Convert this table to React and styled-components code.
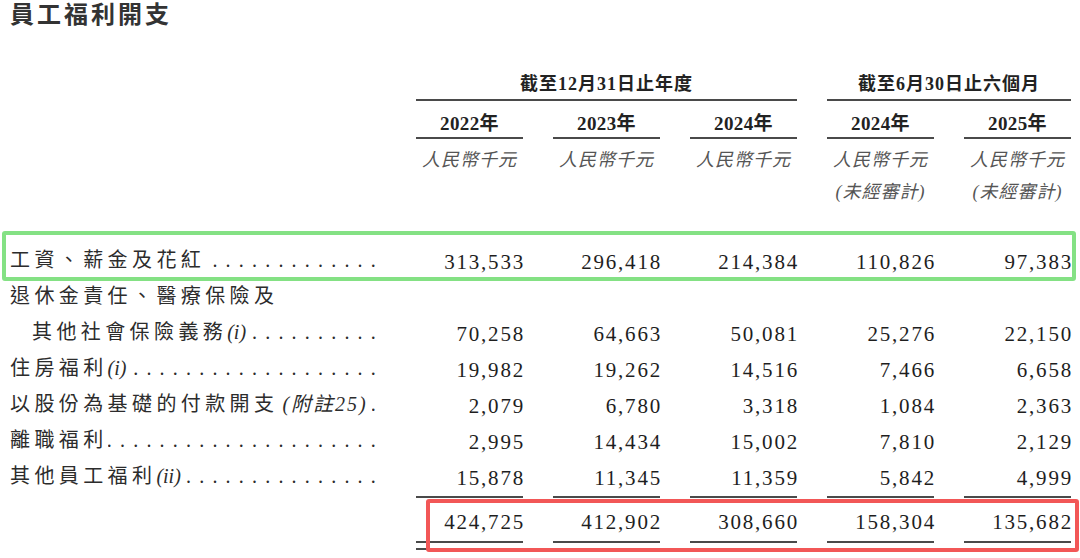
import React from "react";
import styled, { createGlobalStyle } from "styled-components";

const Global = createGlobalStyle`
  html, body { margin: 0; padding: 0; background: #fff; }
  body { font-family: "Liberation Serif", "Noto Sans CJK TC", serif; }
`;

const Page = styled.div`
  position: relative;
  width: 1080px;
  height: 558px;
  overflow: hidden;
  background: #fff;
`;

const Title = styled.h1`
  margin: 0;
  padding-left: 10px;
  font-family: "Noto Sans CJK TC", sans-serif;
  font-weight: 700;
  font-size: 24px;
  line-height: 26px;
  letter-spacing: 3px;
  color: #333;
`;

const Table = styled.div`
  display: grid;
  grid-template-columns: 376px repeat(5, 107px);
  grid-template-rows: 31px 38px 105px repeat(7, 36px) auto;
  column-gap: 30px;
  padding-left: 10px;
  margin-top: 44px;
  color: #222;
`;

const GroupHead = styled.div`
  grid-row: 1;
  grid-column: ${(p) => p.$start} / span ${(p) => p.$span};
  text-align: center;
  font-family: "Liberation Serif", "Noto Sans CJK TC", serif;
  font-weight: 700;
  font-size: 18px;
  line-height: 29px;
  letter-spacing: 1px;
  border-bottom: 2px solid #4a4a4a;
`;

const YearHead = styled.div`
  grid-row: 2;
  grid-column: ${(p) => p.$col};
  align-self: start;
  padding-top: 10px;
  text-align: center;
  font-family: "Liberation Serif", "Noto Sans CJK TC", serif;
  font-weight: 700;
  font-size: 19px;
  line-height: 26px;
  letter-spacing: 0.4px;
  border-bottom: 2px solid #4a4a4a;
`;

const Unit = styled.div`
  grid-row: 3;
  grid-column: ${(p) => p.$col};
  align-self: start;
  padding-top: 5px;
  text-align: center;
  font-family: "Liberation Serif", "Noto Sans CJK TC", serif;
  font-style: italic;
  font-size: 18px;
  line-height: 32px;
  letter-spacing: 1px;
  color: #555;
`;

const UnitLine = styled.div`
  white-space: nowrap;
`;

const Label = styled.div`
  grid-row: ${(p) => p.$row};
  grid-column: 1;
  display: flex;
  white-space: nowrap;
  padding-left: ${(p) => p.$indent || 0}px;
  padding-bottom: 4px;
  font-family: "Liberation Serif", "Noto Sans CJK TC", serif;
  font-size: 20px;
  line-height: 32px;
  letter-spacing: 4.4px;
  color: #2c2c2c;
`;

const LabelText = styled.span`
  flex: none;
`;

const Note = styled.i`
  font-family: "Liberation Serif", "Noto Sans CJK TC", serif;
  letter-spacing: ${(p) => (p.$wide ? 2 : 0)}px;
  padding-left: ${(p) => (p.$wide ? 4 : 0)}px;
  padding-right: 4px;
`;

const Dots = styled.span`
  flex: 1;
  min-width: 0;
  overflow: hidden;
  direction: rtl;
  letter-spacing: 8.2px;
  margin-right: 2px;
`;

const Num = styled.div`
  grid-row: ${(p) => p.$row};
  grid-column: ${(p) => p.$col};
  text-align: right;
  font-family: "Liberation Serif", serif;
  font-size: 21px;
  line-height: 36px;
  letter-spacing: 1.8px;
  margin-right: -2px;
  color: #1e1e1e;
`;

const TotalCell = styled.div`
  grid-row: 11;
  grid-column: ${(p) => p.$col};
  border-top: 2px solid #4a4a4a;
  border-bottom: 2px solid #4a4a4a;
  padding-bottom: 5px;
  align-self: start;
`;

const TotalValue = styled.div`
  padding-top: 5px;
  border-bottom: 2px solid #4a4a4a;
  text-align: right;
  font-family: "Liberation Serif", serif;
  font-size: 21px;
  line-height: 38px;
  letter-spacing: 1.8px;
  color: #1e1e1e;
  & > span {
    margin-right: -2px;
  }
`;

const Highlight = styled.div`
  position: absolute;
  box-sizing: border-box;
  left: ${(p) => p.$x}px;
  top: ${(p) => p.$y}px;
  width: ${(p) => p.$w}px;
  height: ${(p) => p.$h}px;
  border: 4px solid ${(p) => p.$color};
  border-radius: 3px;
  pointer-events: none;
`;

const DOTS = ".".repeat(40);

const rows = [
  { label: "工資、薪金及花紅 ", values: ["313,533", "296,418", "214,384", "110,826", "97,383"] },
  { label: "退休金責任、醫療保險及", noDots: true },
  { label: "其他社會保險義務", note: "(i)", indent: 22, values: ["70,258", "64,663", "50,081", "25,276", "22,150"] },
  { label: "住房福利", note: "(i)", values: ["19,982", "19,262", "14,516", "7,466", "6,658"] },
  { label: "以股份為基礎的付款開支", note: "(附註25)", wide: true, values: ["2,079", "6,780", "3,318", "1,084", "2,363"] },
  { label: "離職福利", values: ["2,995", "14,434", "15,002", "7,810", "2,129"] },
  { label: "其他員工福利", note: "(ii)", values: ["15,878", "11,345", "11,359", "5,842", "4,999"] },
];

const totals = ["424,725", "412,902", "308,660", "158,304", "135,682"];
const years = ["2022年", "2023年", "2024年", "2024年", "2025年"];

export default function App() {
  return (
    <Page>
      <Global />
      <Title>員工福利開支</Title>
      <Table>
        <GroupHead $start={2} $span={3}>截至12月31日止年度</GroupHead>
        <GroupHead $start={5} $span={2}>截至6月30日止六個月</GroupHead>
        {years.map((y, i) => (
          <YearHead key={i} $col={i + 2}>{y}</YearHead>
        ))}
        {years.map((_, i) => (
          <Unit key={i} $col={i + 2}>
            <UnitLine>人民幣千元</UnitLine>
            {i >= 3 && <UnitLine>(未經審計)</UnitLine>}
          </Unit>
        ))}
        {rows.map((r, ri) => (
          <React.Fragment key={ri}>
            <Label $indent={r.indent} $row={ri + 4}>
              <LabelText>
                {r.label}
                {r.note && <Note $wide={r.wide}>{r.note}</Note>}
              </LabelText>
              {!r.noDots && <Dots>{DOTS}</Dots>}
            </Label>
            {r.values &&
              r.values.map((v, ci) => (
                <Num key={ci} $row={ri + 4} $col={ci + 2}>{v}</Num>
              ))}
          </React.Fragment>
        ))}
        {totals.map((v, ci) => (
          <TotalCell key={ci} $col={ci + 2}>
            <TotalValue><span>{v}</span></TotalValue>
          </TotalCell>
        ))}
      </Table>
      <Highlight $x={2} $y={231} $w={1074} $h={50} $color="#84e184" />
      <Highlight $x={426} $y={499} $w={653} $h={53} $color="#f25757" />
    </Page>
  );
}
